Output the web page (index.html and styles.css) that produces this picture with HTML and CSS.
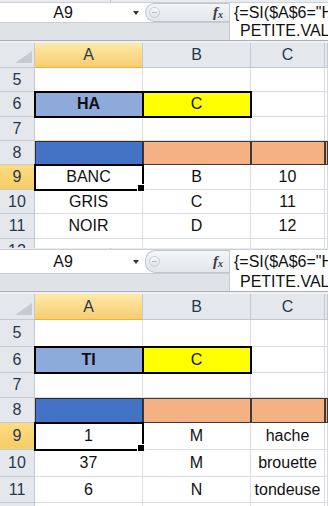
FILE: index.html
```html
<!DOCTYPE html>
<html lang="fr">
<head>
  <meta charset="UTF-8">
  <title>Feuille - formule matricielle</title>
  <link rel="stylesheet" href="styles.css">
</head>
<body>
  <!-- premiere capture -->
  <div class="panel p1">
    <div class="strip"><span></span></div>
    <div class="fbar">
      <div class="fleft">
        <div class="ftop">
          <div class="namebox"><span class="ref">A9</span><span class="arrow"></span></div>
          <div class="pill"><span class="knob"></span><span class="fx"><i>f</i><sub>x</sub></span></div>
        </div>
        <div class="fbottom"></div>
      </div>
      <div class="formula">
        <div class="l1">{=SI($A$6="HA";</div>
        <div class="l2">PETITE.VALEUR(</div>
      </div>
    </div>
    <div class="sep"></div>

    <div class="row h25">
      <div class="hd corner"></div><div class="hd csel">A</div><div class="hd">B</div><div class="hd">C</div><div class="hd"></div>
    </div>
    <div class="row h24">
      <div class="hd">5</div><div></div><div></div><div></div><div></div>
    </div>
    <div class="row h25">
      <div class="hd">6</div><div class="ha">HA</div><div class="yc">C</div><div></div><div></div>
    </div>
    <div class="row h24">
      <div class="hd">7</div><div></div><div></div><div></div><div></div>
    </div>
    <div class="row h24">
      <div class="hd">8</div><div class="blue"></div><div class="sal"></div><div class="sal"></div><div class="sal"></div>
    </div>
    <div class="row h25">
      <div class="hd rsel">9</div><div class="cur">BANC</div><div>B</div><div>10</div><div></div>
    </div>
    <div class="row h24">
      <div class="hd">10</div><div>GRIS</div><div>C</div><div>11</div><div></div>
    </div>
    <div class="row h25">
      <div class="hd">11</div><div>NOIR</div><div>D</div><div>12</div><div></div>
    </div>
    <div class="row h24">
      <div class="hd">12</div><div></div><div></div><div></div><div></div>
    </div>
  </div>

  <!-- deuxieme capture -->
  <div class="panel p2">
    <div class="strip"><span></span></div>
    <div class="fbar">
      <div class="fleft">
        <div class="ftop">
          <div class="namebox"><span class="ref">A9</span><span class="arrow"></span></div>
          <div class="pill"><span class="knob"></span><span class="fx"><i>f</i><sub>x</sub></span></div>
        </div>
        <div class="fbottom"></div>
      </div>
      <div class="formula">
        <div class="l1">{=SI($A$6="HA";</div>
        <div class="l2">PETITE.VALEUR(</div>
      </div>
    </div>
    <div class="sep"></div>

    <div class="row h26">
      <div class="hd corner"></div><div class="hd csel">A</div><div class="hd">B</div><div class="hd">C</div><div class="hd"></div>
    </div>
    <div class="row h27">
      <div class="hd">5</div><div></div><div></div><div></div><div></div>
    </div>
    <div class="row h26">
      <div class="hd">6</div><div class="ha">TI</div><div class="yc">C</div><div></div><div></div>
    </div>
    <div class="row h25">
      <div class="hd">7</div><div></div><div></div><div></div><div></div>
    </div>
    <div class="row h25">
      <div class="hd">8</div><div class="blue"></div><div class="sal"></div><div class="sal"></div><div class="sal"></div>
    </div>
    <div class="row h27">
      <div class="hd rsel">9</div><div class="cur">1</div><div>M</div><div>hache</div><div></div>
    </div>
    <div class="row h27">
      <div class="hd">10</div><div>37</div><div>M</div><div>brouette</div><div></div>
    </div>
    <div class="row h26">
      <div class="hd">11</div><div>6</div><div>N</div><div>tondeuse</div><div></div>
    </div>
    <div class="row h26">
      <div class="hd">12</div><div></div><div></div><div></div><div></div>
    </div>
  </div>
</body>
</html>
```

FILE: styles.css
```css
* { box-sizing: border-box; }
body { margin: 0; width: 328px; height: 506px; overflow: hidden; background: #fff; font-family: "Liberation Sans", Arial, sans-serif; color: #111; }

.panel { overflow: hidden; }
.p1 { height: 248px; }
.p2 { height: 258px; }

/* bande du ruban au-dessus */
.strip { height: 3px; background: #e9ebee; border-bottom: 1px solid #cbd0d6; }
.strip span { display: block; width: 111px; height: 100%; border-right: 1px solid #c3c8ce; }
.p2 .strip { height: 2px; }

/* barre de formule */
.fbar { display: flex; height: 37px; }
.p2 .fbar { height: 41px; }
.fleft { width: 229px; display: flex; flex-direction: column; }
.ftop { height: 19px; display: flex; background: #fff; }
.p2 .ftop { height: 23px; }
.fbottom { flex: 1; background: #dfe3e8; border-top: 1px solid #c8cdd3; }

.namebox { width: 145px; display: flex; align-items: center; }
.ref { width: 126px; text-align: center; font-size: 16px; }
.arrow { width: 0; height: 0; margin-left: 7px; border-left: 3px solid transparent; border-right: 3px solid transparent; border-top: 4px solid #333; }

.pill { flex: 1; display: flex; align-items: center; background: linear-gradient(#f3f5f7, #e3e7eb); border: 1px solid #c1c6cc; border-right: 0; border-radius: 10px 0 0 10px; }
.knob { width: 11px; height: 11px; margin-left: 3px; border-radius: 50%; border: 1px solid #c9ced4; background: linear-gradient(#fafbfc, #dfe3e7); position: relative; }
.knob::after { content: ""; position: absolute; left: 2px; top: 4px; width: 5px; height: 1px; background: #b3b9c0; }
.fx { margin-left: auto; margin-right: 6px; font-family: "Liberation Serif", serif; font-size: 15px; font-weight: bold; color: #3c3c3c; }
.fx sub { font-size: 10px; font-style: italic; vertical-align: -1px; }

.formula { flex: 1; background: #fff; border-left: 1px solid #c5cad1; font-size: 16px; white-space: nowrap; overflow: hidden; padding-left: 4px; }
.l1 { line-height: 19px; }
.l2 { line-height: 18px; padding-left: 6px; }
.p2 .l1 { line-height: 23px; }

.sep { height: 3px; background: #eef0f3; border-top: 1px solid #a9b0b8; }

/* grille */
.row { display: grid; grid-template-columns: 35px 108px 108px 74px 1fr; }
.h24 { height: 24px; }
.h25 { height: 25px; }
.h26 { height: 26px; }
.h27 { height: 27px; }

.row > div { position: relative; display: flex; align-items: center; justify-content: center; font-size: 16px; border-right: 1px solid #dadcdf; border-bottom: 1px solid #dadcdf; }

.hd { background: #e4e8ec; color: #27384d; border-color: #c3c9d0 !important; }
.row > .csel { background: linear-gradient(#fdeaa9, #f7cd6f); border-bottom-color: #eeb23b !important; }
.row > .rsel { background: linear-gradient(#fbdc82, #f6cd66); border-right-color: #eeb23b !important; }
.corner::after { content: ""; position: absolute; right: 2px; bottom: 4px; border-left: 17px solid transparent; border-bottom: 12px solid #c6cbd1; }

.ha { background: #8eaadb; font-weight: bold; outline: 2px solid #000; outline-offset: -1px; z-index: 2; }
.yc { background: #ffff00; outline: 2px solid #000; outline-offset: -1px; z-index: 2; }
.blue { background: #4472c4; outline: 1px solid #2d2d2d; outline-offset: -1px; z-index: 1; }
.sal { background: #f4b183; outline: 1px solid #3a3a3a; outline-offset: -1px; z-index: 1; }

.cur { outline: 2px solid #000; outline-offset: -1px; z-index: 3; }
.cur::after { content: ""; position: absolute; right: -3px; bottom: -3px; width: 6px; height: 6px; background: #000; border: 1px solid #fff; }
```
